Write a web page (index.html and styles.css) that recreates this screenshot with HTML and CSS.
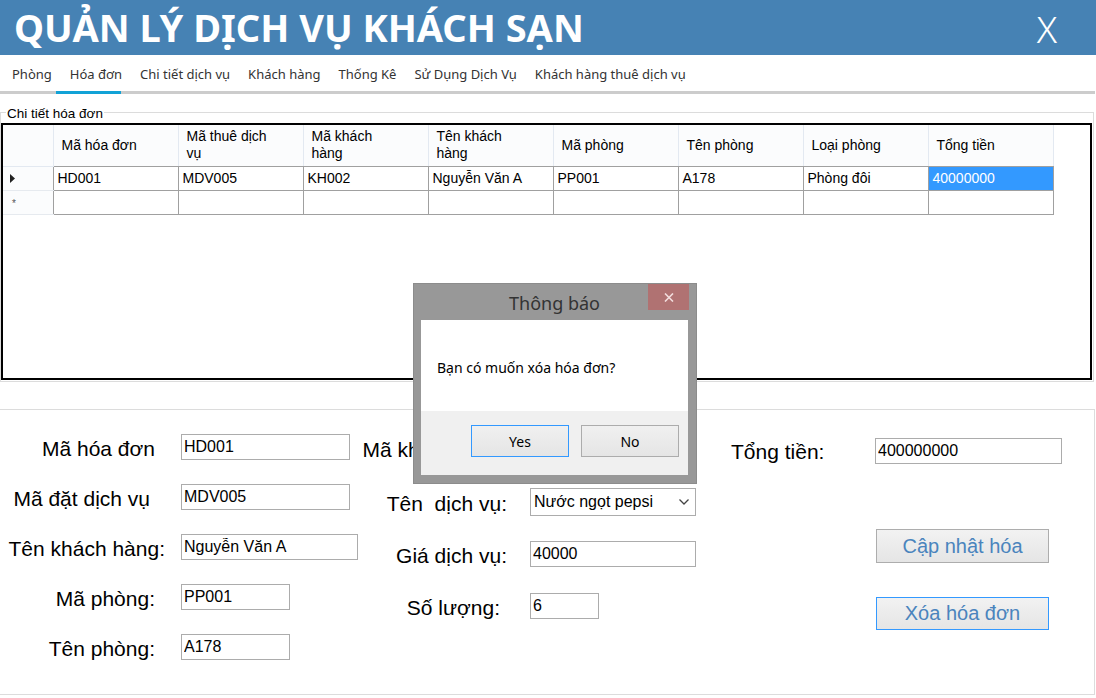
FILE: index.html
```html
<!DOCTYPE html>
<html lang="vi">
<head>
<meta charset="utf-8">
<title>Quản lý dịch vụ khách sạn</title>
<link rel="stylesheet" href="styles.css">
</head>
<body>
<header class="app-header">
  <h1 class="app-title">QUẢN LÝ DỊCH VỤ KHÁCH SẠN</h1>
  <span class="app-close">X</span>
</header>

<nav class="tabs">
  <span class="tab">Phòng</span>
  <span class="tab active">Hóa đơn</span>
  <span class="tab">Chi tiết dịch vụ</span>
  <span class="tab">Khách hàng</span>
  <span class="tab">Thống Kê</span>
  <span class="tab">Sử Dụng Dịch Vụ</span>
  <span class="tab">Khách hàng thuê dịch vụ</span>
</nav>

<fieldset class="grid-group">
  <legend class="grid-legend">Chi tiết hóa đơn</legend>
  <div class="dgv">
    <table class="dgv-table">
      <colgroup>
        <col class="c-rh">
        <col class="c-data"><col class="c-data"><col class="c-data"><col class="c-data">
        <col class="c-data"><col class="c-data"><col class="c-data"><col class="c-data">
      </colgroup>
      <thead>
        <tr>
          <th class="rh"></th>
          <th>Mã hóa đơn</th>
          <th>Mã thuê dịch vụ</th>
          <th>Mã khách hàng</th>
          <th>Tên khách hàng</th>
          <th>Mã phòng</th>
          <th>Tên phòng</th>
          <th>Loại phòng</th>
          <th>Tổng tiền</th>
        </tr>
      </thead>
      <tbody>
        <tr>
          <td class="rh"><svg class="row-arrow" width="6" height="9" viewBox="0 0 6 9"><path d="M0 0 L5 4.5 L0 9 Z" fill="#222"/></svg></td>
          <td>HD001</td>
          <td>MDV005</td>
          <td>KH002</td>
          <td>Nguyễn Văn A</td>
          <td>PP001</td>
          <td>A178</td>
          <td>Phòng đôi</td>
          <td class="selected">40000000</td>
        </tr>
        <tr>
          <td class="rh"><span class="row-new">*</span></td>
          <td></td><td></td><td></td><td></td><td></td><td></td><td></td><td></td>
        </tr>
      </tbody>
    </table>
  </div>
</fieldset>

<section class="form-group">
  <div class="fcol fcol-1">
    <label class="flabel">Mã hóa đơn</label>
    <input class="finput w-md" value="HD001" readonly>
    <label class="flabel lbl-dv">Mã đặt dịch vụ</label>
    <input class="finput w-md" value="MDV005" readonly>
    <label class="flabel lbl-wide">Tên khách hàng:</label>
    <input class="finput w-lg" value="Nguyễn Văn A" readonly>
    <label class="flabel">Mã phòng:</label>
    <input class="finput w-sm" value="PP001" readonly>
    <label class="flabel">Tên phòng:</label>
    <input class="finput w-sm" value="A178" readonly>
  </div>

  <div class="fcol fcol-2">
    <label class="flabel flabel-2 lbl-mkh">Mã khách hàng:</label>
    <input class="finput w-mid" value="KH002" readonly>
    <label class="flabel flabel-2">Tên&nbsp; dịch vụ:</label>
    <div class="combo">
      <span class="combo-text">Nước ngọt pepsi</span>
      <svg class="combo-arrow" width="10" height="6" viewBox="0 0 10 6"><path d="M0.5 0.5 L5 5 L9.5 0.5" fill="none" stroke="#444" stroke-width="1.3"/></svg>
    </div>
    <label class="flabel flabel-2">Giá dịch vụ:</label>
    <input class="finput w-mid" value="40000" readonly>
    <label class="flabel flabel-2 lbl-sl">Số lượng:</label>
    <input class="finput w-xs" value="6" readonly>
  </div>

  <div class="fcol fcol-3">
    <div class="total-row">
      <label class="flabel total-label">Tổng tiền:</label>
      <input class="finput w-total" value="400000000" readonly>
    </div>
    <button class="action-btn">Cập nhật hóa</button>
    <button class="action-btn focused">Xóa hóa đơn</button>
  </div>
</section>

<div class="msgbox">
  <div class="msgbox-title">Thông báo</div>
  <span class="msgbox-close"><svg width="10" height="9" viewBox="0 0 10 9"><path d="M1 0.5 L9 8.5 M9 0.5 L1 8.5" stroke="#f2dede" stroke-width="1.6"/></svg></span>
  <div class="msgbox-body">Bạn có muốn xóa hóa đơn?</div>
  <div class="msgbox-actions">
    <button class="msg-btn focused">Yes</button>
    <button class="msg-btn">No</button>
  </div>
</div>
</body>
</html>
```

FILE: styles.css
```css
* { box-sizing: border-box; }

body {
  margin: 0;
  width: 1096px;
  height: 698px;
  overflow: hidden;
  position: relative;
  background: #fff;
  font-family: "Liberation Sans", Arial, sans-serif;
  color: #000;
}

/* ---------- header ---------- */
.app-header {
  height: 55px;
  background: #4682b4;
  color: #fff;
  display: flex;
  align-items: center;
  justify-content: space-between;
  padding: 0 39px 0 14px;
}
.app-title {
  margin: 0;
  font-family: "Noto Sans", "Open Sans", sans-serif;
  font-weight: 700;
  font-size: 38px;
  line-height: 1;
  padding-bottom: 2px;
}
.app-close {
  font-family: "Noto Sans", "Open Sans", sans-serif;
  font-weight: 300;
  font-size: 37px;
  line-height: 1;
  padding-top: 2px;
}

/* ---------- tabs ---------- */
.tabs {
  display: flex;
  height: 39px;
  width: 1095px;
  padding: 2px 0 0 12px;
  border-bottom: 3px solid #cccccc;
  font-family: "Noto Sans", "Open Sans", sans-serif;
  font-size: 13px;
  color: #333;
}
.tab {
  display: flex;
  align-items: center;
  margin-right: 18px;
  position: relative;
  white-space: nowrap;
}
.tab.active::after {
  content: "";
  position: absolute;
  left: -14px;
  width: 65px;
  bottom: -3px;
  height: 3px;
  background: #12a2d6;
}

/* ---------- data grid group ---------- */
.grid-group {
  margin: 10px 0 0 0;
  padding: 2px 1px 1px 0;
  width: 1094px;
  border: 1px solid #dcdcdc;
  min-width: 0;
}
.grid-legend {
  margin-left: 5px;
  padding: 2px 1px 0;
  font-size: 13.5px;
  line-height: 15px;
  color: #000;
}
.dgv {
  height: 257px;
  border: 2px solid #000;
  background: #fff;
}
.dgv-table {
  border-collapse: collapse;
  table-layout: fixed;
  width: 1050px;
  font-size: 14px;
}
.c-rh { width: 50px; }
.c-data { width: 125px; }

.dgv-table th {
  height: 41px;
  padding: 0 30px 0 8px;
  text-align: left;
  font-weight: normal;
  line-height: 17px;
  background: #fbfcfd;
  border-right: 1px solid #e3e9f1;
  border-bottom: 1px solid #a0a0a0;
  vertical-align: middle;
}
.dgv-table th.rh {
  border-bottom: 1px solid #e3e9f1;
}
.dgv-table td {
  height: 24px;
  padding: 0 4px;
  border: 1px solid #a0a0a0;
  white-space: nowrap;
  overflow: hidden;
}
.dgv-table td.rh {
  border-left: none;
  border-top: 1px solid #e6eaef;
  border-bottom: 1px solid #e6eaef;
  background: #fbfcfd;
  padding: 0 0 0 7px;
  vertical-align: middle;
}
.row-arrow { display: block; }
.row-new {
  font-size: 10px;
  color: #555;
  padding-left: 2px;
}
.dgv-table td.selected {
  background: #3399ff;
  color: #fff;
}

/* ---------- form group ---------- */
.form-group {
  margin-top: 27px;
  width: 1095px;
  height: 286px;
  border: 1px solid #dcdcdc;
  border-left: none;
  display: flex;
  align-items: flex-start;
}
.fcol { display: grid; align-items: center; }
.fcol-1 {
  grid-template-columns: 165px 177px;
  column-gap: 16px;
  grid-auto-rows: 50px;
  padding-top: 12px;
}
.fcol-2 {
  grid-template-columns: 149px 166px;
  column-gap: 23px;
  grid-auto-rows: 52px;
  padding-top: 14px;
}
.flabel {
  font-size: 21px;
  justify-self: end;
  padding-right: 10px;
  padding-top: 3px;
  white-space: nowrap;
}
.flabel-2 { padding-right: 0; }
.lbl-wide { padding-right: 0; }
.lbl-dv { padding-right: 15px; }
.lbl-sl { padding-right: 7px; }
.lbl-mkh { margin-right: -5px; padding-bottom: 4px; }

.finput {
  height: 26px;
  border: 1px solid #acacac;
  padding: 0 2px;
  font-family: "Liberation Sans", Arial, sans-serif;
  font-size: 16px;
  color: #000;
  background: #fff;
  justify-self: start;
  outline: none;
}
.w-md { width: 169px; }
.w-lg { width: 177px; }
.w-sm { width: 109px; }
.w-mid { width: 166px; }
.w-xs { width: 69px; }
.w-total { width: 187px; }

.combo {
  width: 166px;
  height: 28px;
  border: 1px solid #acacac;
  background: #fff;
  display: flex;
  align-items: center;
  justify-content: space-between;
  padding: 0 6px 0 3px;
  font-size: 16px;
}

.fcol-3 {
  display: flex;
  flex-direction: column;
  align-items: flex-start;
  padding: 28px 0 0 35px;
}
.total-row {
  display: flex;
  align-items: center;
}
.total-label {
  width: 144px;
  padding: 2px 0 0 0;
}
.action-btn {
  margin: 65px 0 0 145px;
  width: 173px;
  height: 34px;
  border: 1px solid #adadad;
  background: linear-gradient(#f2f2f2, #e5e5e5);
  color: #4a84bd;
  font-family: "Liberation Sans", Arial, sans-serif;
  font-size: 20px;
  padding: 0;
}
.action-btn + .action-btn {
  margin-top: 34px;
  height: 33px;
}
.action-btn.focused { border-color: #3399ff; }

/* ---------- message box ---------- */
.msgbox {
  position: absolute;
  left: 413px;
  top: 283px;
  width: 284px;
  height: 201px;
  background: #989898;
  border: 1px solid #8c8c8c;
  padding: 0 8px 8px 7px;
  display: flex;
  flex-direction: column;
  font-family: "Noto Sans", "Open Sans", sans-serif;
}
.msgbox-title {
  height: 36px;
  display: flex;
  align-items: center;
  justify-content: center;
  font-size: 18px;
  color: #333;
  padding-top: 2px;
}
.msgbox-close {
  position: absolute;
  right: 7px;
  top: 0;
  width: 41px;
  height: 26px;
  background: #b07272;
  display: flex;
  align-items: center;
  justify-content: center;
}
.msgbox-body {
  height: 91px;
  background: #fff;
  display: flex;
  align-items: center;
  padding: 3px 0 0 16px;
  font-size: 14px;
  color: #000;
}
.msgbox-actions {
  height: 64px;
  background: #f0f0f0;
  display: flex;
  justify-content: flex-end;
  align-items: flex-start;
  gap: 12px;
  padding: 14px 9px 0 0;
}
.msg-btn {
  width: 98px;
  height: 32px;
  border: 1px solid #acacac;
  background: linear-gradient(#f0f0f0, #e5e5e5);
  font-family: "Noto Sans", "Open Sans", sans-serif;
  font-size: 14px;
  color: #000;
  padding: 0;
}
.msg-btn.focused { border-color: #3399ff; }
```
